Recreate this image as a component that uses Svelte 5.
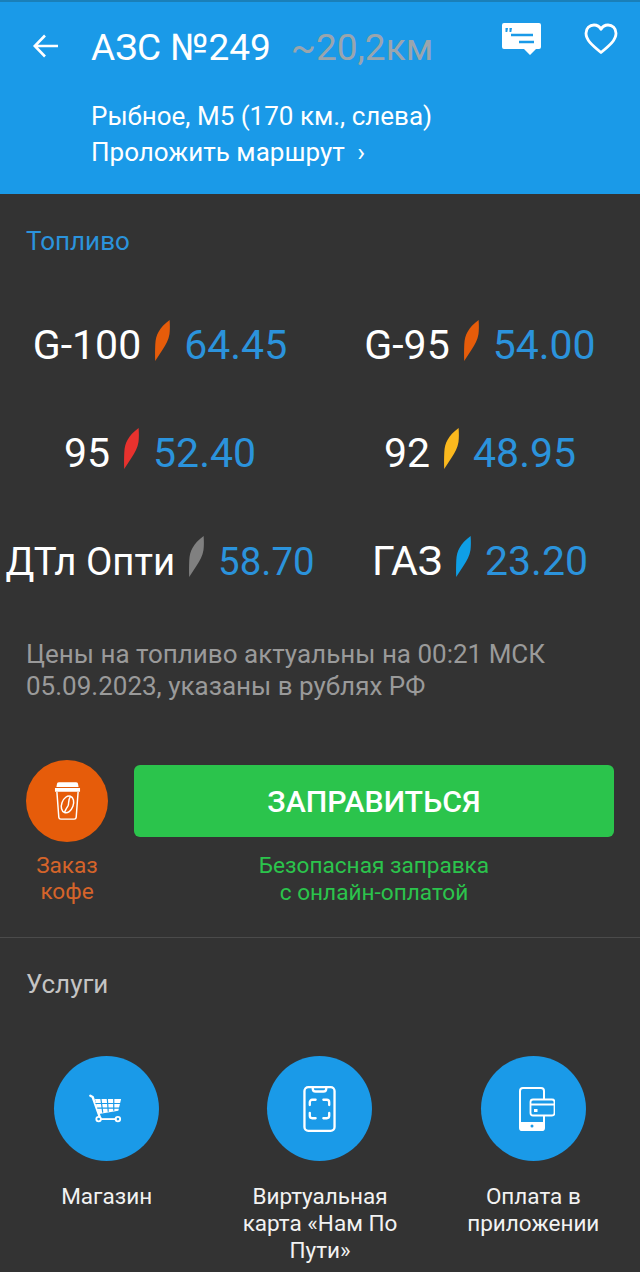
<script>
  const fuels = [
    { name: 'G-100', color: '#e65c0a', price: '64.45' },
    { name: 'G-95', color: '#e65c0a', price: '54.00' },
    { name: '95', color: '#e8322e', price: '52.40' },
    { name: '92', color: '#fbb91e', price: '48.95' },
    { name: 'ДТл Опти', color: '#808080', price: '58.70', small: true },
    { name: 'ГАЗ', color: '#0f9fe6', price: '23.20' }
  ];
</script>

<div class="page">
  <header class="header">
    <div class="top">
      <svg class="back" viewBox="0 0 30 30" width="30" height="30" fill="none" stroke="#fff" stroke-width="2.6">
        <path d="M27 15H4M14 4.500L3.800 15 14 25.500" />
      </svg>
      <div class="title">АЗС №249</div>
      <div class="dist">~20,2км</div>
      <div class="actions">
        <svg viewBox="0 0 39 32" width="39" height="32">
          <path fill="#fff" d="M2 0h35a2 2 0 0 1 2 2v22a2 2 0 0 1-2 2h-3l-6 6-6-6H2a2 2 0 0 1-2-2V2a2 2 0 0 1 2-2z" />
          <path fill="#1a9ae8" d="M3.500 5h2.500l-.7 4H3.500zM7.500 5H10l-.7 4H7.500zM9 10.800h22v2.400H9zM17 17.800h15v2.400H17z" />
        </svg>
        <svg viewBox="0 0 34 32" width="34" height="32" fill="none" stroke="#fff" stroke-width="2.800" stroke-linejoin="round">
          <path d="M17 29.500C8 22 2 17 2 10.200 2 5.500 5.500 2 10 2c3 0 5.600 1.600 7 4.300C18.400 3.600 21 2 24 2c4.500 0 8 3.500 8 8.200C32 17 26 22 17 29.500z" />
        </svg>
      </div>
    </div>
    <div class="addr">Рыбное, М5 (170 км., слева)</div>
    <div class="route">Проложить маршрут <span class="chev">›</span></div>
  </header>

  <section class="fuel">
    <h2 class="fuel-title">Топливо</h2>
    <div class="grid">
      {#each fuels as f}
        <div class="item" class:small={f.small}>
          <span class="name">{f.name}</span>
          <svg class="leaf" viewBox="0 0 15 41" width="15" height="41">
            <path fill={f.color} d="M14.600 0C15 5 15 10 14.500 14 13.500 20 11 24 8 29L.2 41C0 35 0 30 .3 24 .8 15 4 8 14.600 0z" />
          </svg>
          <span class="price">{f.price}</span>
        </div>
      {/each}
    </div>
    <p class="note">Цены на топливо актуальны на 00:21 МСК 05.09.2023, указаны в рублях РФ</p>
  </section>

  <section class="order">
    <div class="coffee">
      <div class="coffee-circle">
        <svg viewBox="0 0 28 40" width="27" height="39" fill="none" stroke="#fff" stroke-width="1.500">
          <path fill="#fff" stroke="none" d="M5 0h18a2 2 0 0 1 2 2l.5 3h-23L3 2a2 2 0 0 1 2-2zM1 6h26v4H1z" />
          <path d="M3 10l2 26.500a2 2 0 0 0 2 1.800h14a2 2 0 0 0 2-1.800L25 10" />
          <ellipse cx="14" cy="23" rx="6" ry="9" transform="rotate(20 14 23)" />
          <path d="M17 15c-3 4-1 7-2.500 9.500-1 1.500-2 3-3.500 6.500" />
        </svg>
      </div>
      <div class="coffee-label">Заказ<br />кофе</div>
    </div>
    <div class="fill">
      <button class="go">ЗАПРАВИТЬСЯ</button>
      <div class="safe">Безопасная заправка<br />с онлайн-оплатой</div>
    </div>
  </section>

  <div class="divider"></div>

  <section class="services">
    <h2 class="services-title">Услуги</h2>
    <div class="svc-grid">
      <div class="svc">
        <div class="svc-circle">
          <svg class="cart" viewBox="0 0 36 32" width="33" height="30" fill="none" stroke="#fff" stroke-width="2">
            <path stroke-width="2.600" stroke-linecap="round" d="M1.500 1.500L4 3l7.500 21" />
            <path fill="#fff" stroke="none" d="M6.500 5h28.500l-3 13-21 3.500z" />
            <path stroke="#1a9ae8" stroke-width="1.300" d="M7 10h28M9 15h25M13 5l2 15M20 5l1 14M27 5v13" />
            <path stroke-width="2" d="M12 27h18" />
            <circle cx="10.500" cy="27" r="2.500" />
            <circle cx="31.500" cy="27" r="2.500" />
          </svg>
        </div>
        <div class="svc-label">Магазин</div>
      </div>
      <div class="svc">
        <div class="svc-circle">
          <svg viewBox="0 0 34 48" width="33" height="48" fill="none" stroke="#fff" stroke-width="2.400" stroke-linecap="round">
            <rect x="1.500" y="1.500" width="31" height="45" rx="4" />
            <path d="M10 2.500c0 2.500 1 3.500 3 3.500h8c2 0 3-1 3-3.500" />
            <path d="M7 20v-3a2.500 2.500 0 0 1 2.500-2.500h3.500M21 14.500h3.500a2.500 2.500 0 0 1 2.500 2.500v3M27 28v3a2.500 2.500 0 0 1-2.500 2.500H21M13 33.500H9.500A2.500 2.500 0 0 1 7 31v-3" />
          </svg>
        </div>
        <div class="svc-label">Виртуальная карта «Нам По Пути»</div>
      </div>
      <div class="svc">
        <div class="svc-circle">
          <svg class="pay" viewBox="0 0 36 44" width="36" height="44" fill="none" stroke="#fff" stroke-width="1.800">
            <path stroke-width="2" d="M25 12V4a3 3 0 0 0-3-3H4a3 3 0 0 0-3 3v37a2 2 0 0 0 2 2h20a2 2 0 0 0 2-2v-12" />
            <path fill="#fff" stroke="none" d="M1 35h24v7a2 2 0 0 1-2 2H3a2 2 0 0 1-2-2z" />
            <circle cx="13" cy="39" r="1.500" fill="#1a9ae8" stroke="none" />
            <rect x="11.500" y="12.500" width="24" height="16" rx="2.500" fill="#1a9ae8" />
            <path d="M12 17.500h23" stroke-width="2" />
            <rect x="15" y="22" width="3.500" height="3" fill="#fff" stroke="none" />
          </svg>
        </div>
        <div class="svc-label">Оплата в приложении</div>
      </div>
    </div>
  </section>
</div>

<style>
  :global(body) { margin: 0; background: #333; }
  .page {
    width: 640px;
    height: 1272px;
    overflow: hidden;
    background: #333;
    font-family: Roboto, sans-serif;
    color: #fff;
  }
  .header {
    height: 194px;
    box-sizing: border-box;
    background: #1a9ae8;
    border-top: 2px solid #1a7fb8;
    padding: 0 0 0 91px;
    position: relative;
  }
  .top { display: flex; align-items: flex-start; height: 70px; position: relative; }
  .back { margin: 29px 0 0 -60px; }
  .title { margin-left: 30px; font-size: 37px; line-height: 40px; margin-top: 26px; }
  .dist { margin-left: 20px; font-size: 37px; line-height: 40px; margin-top: 26px; color: #9aa5ad; }
  .actions { margin-left: auto; display: flex; align-items: flex-start; gap: 43px; padding: 21px 22px 0 0; }
  .addr { margin-top: 27px; font-size: 26px; line-height: 34px; }
  .route { font-size: 26px; line-height: 34px; margin-top: 2px; }
  .chev { margin-left: 6px; }
  .fuel-title { margin: 32px 0 0 26px; font-size: 26px; line-height: 30px; font-weight: 400; color: #2b93dc; }
  .grid { display: grid; grid-template-columns: 1fr 1fr; grid-auto-rows: 108px; margin-top: 35px; }
  .item { display: flex; justify-content: center; align-items: center; font-size: 41px; }
  .small { font-size: 38.4px; }
  .name { color: #fff; }
  .leaf { margin: -10px 14px 0 14px; }
  .price { color: #2b93dc; }
  .note { margin: 23px 26px 0; font-size: 26px; line-height: 32px; color: #9a9a9a; }
  .order { display: flex; padding: 0 26px; margin-top: 58px; gap: 26px; align-items: flex-start; }
  .coffee { width: 82px; }
  .coffee-circle { width: 82px; height: 82px; border-radius: 50%; background: #e65c0a; display: flex; align-items: center; justify-content: center; }
  .coffee-label { margin-top: 11px; color: #d5642a; font-size: 22.6px; line-height: 26px; text-align: center; }
  .fill { flex: 1; }
  .go {
    display: block; width: 100%; height: 72px; margin-top: 5px; border: 0; border-radius: 6px;
    background: #2bc44c; color: #fff; font-family: Roboto, sans-serif; font-size: 30.3px; font-weight: 500;
  }
  .safe { margin-top: 15px; text-align: center; color: #2bc44c; font-size: 22.6px; line-height: 27px; }
  .divider { height: 1px; background: #4b4b4b; margin-top: 31px; }
  .services-title { margin: 31px 0 0 26px; font-size: 26px; line-height: 30px; font-weight: 400; color: #c4c4c4; }
  .svc-grid { display: grid; grid-template-columns: repeat(3, 1fr); margin-top: 57px; }
  .svc { display: flex; flex-direction: column; align-items: center; }
  .svc-circle { width: 105px; height: 105px; border-radius: 50%; background: #1a9ae8; display: flex; align-items: center; justify-content: center; }
  .cart { margin-right: 3px; }
  .pay { margin-left: 7px; }
  .svc-label { margin-top: 22px; width: 170px; text-align: center; font-size: 22.5px; line-height: 27px; color: #f2f2f2; }
</style>
